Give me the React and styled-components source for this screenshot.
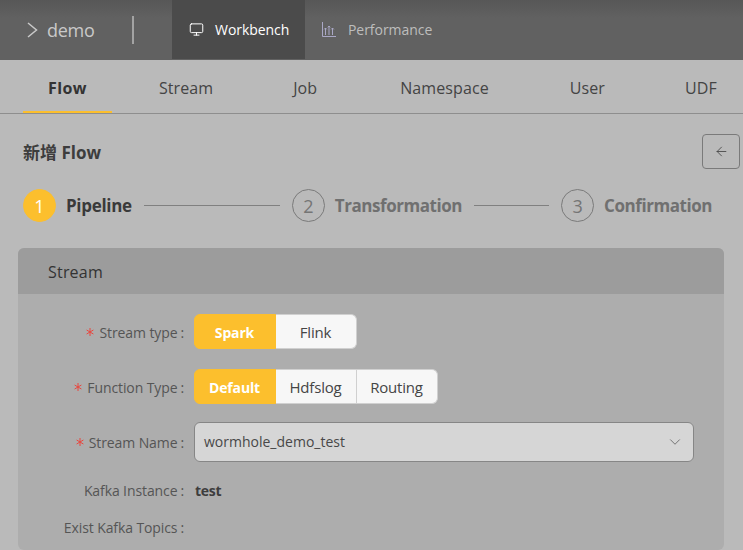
import React from 'react';
import styled, { createGlobalStyle } from 'styled-components';
import { Monitor, ChevronDown, ArrowLeft } from 'lucide-react';

const GlobalStyle = createGlobalStyle`
    html, body {
        margin: 0;
        height: 100%;
        overflow: hidden;
        background: #bababa;
    }
    body {
        font-family: "Open Sans", "Noto Sans CJK SC", sans-serif;
        color: #3a3a3a;
    }
`;

const Page = styled.div`
    width: 743px;
    height: 550px;
    overflow: hidden;
    display: flex;
    flex-direction: column;
    background: #bababa;
`;

const TopBar = styled.header`
    height: 60px;
    flex: none;
    display: flex;
    align-items: stretch;
    background: linear-gradient(#575757, #616161 30%);
`;

const Brand = styled.div`
    width: 132px;
    display: flex;
    align-items: center;
    gap: 9px;
    padding-left: 27px;
    box-sizing: border-box;
    font-size: 18px;
    letter-spacing: -0.3px;
    color: #c9c9c9;
`;

const BrandRule = styled.div`
    width: 2px;
    height: 28px;
    align-self: center;
    margin-right: 38px;
    background: #a3a3a3;
`;

const NavItem = styled.div`
    width: ${(p) => p.$width}px;
    height: 59px;
    display: flex;
    align-items: center;
    gap: ${(p) => (p.$active ? 11 : 12)}px;
    padding-left: 17px;
    box-sizing: border-box;
    font-size: 14px;
    letter-spacing: -0.05px;
    background: ${(p) => (p.$active ? '#4b4b4b' : 'transparent')};
    color: ${(p) => (p.$active ? '#ffffff' : '#bdbdbd')};
`;

const Tabs = styled.nav`
    height: 54px;
    flex: none;
    box-sizing: border-box;
    display: flex;
    padding-left: 23px;
    border-bottom: 1px solid #8e8e8e;
`;

const Tab = styled.div`
    height: 53px;
    box-sizing: border-box;
    padding: 5px 25px 0;
    margin-right: ${(p) => p.$gap}px;
    display: flex;
    align-items: center;
    white-space: nowrap;
    font-size: 16px;
    letter-spacing: ${(p) => (p.$active ? '0.4px' : '0.1px')};
    font-weight: ${(p) => (p.$active ? 700 : 400)};
    color: ${(p) => (p.$active ? '#333333' : '#444444')};
    border-bottom: 2px solid ${(p) => (p.$active ? '#fcbf2d' : 'transparent')};
`;

const TitleRow = styled.div`
    display: flex;
    align-items: center;
    justify-content: space-between;
    padding: 20px 3px 0 23px;
`;

const Title = styled.h2`
    margin: 0;
    font-size: 17px;
    font-weight: 700;
    color: #3d3d3d;
`;

const BackButton = styled.button`
    width: 38px;
    height: 35px;
    padding: 0;
    display: flex;
    align-items: center;
    justify-content: center;
    background: transparent;
    border: 1px solid #7a7a7a;
    border-radius: 4px;
    color: #3f3f3f;
`;

const Steps = styled.div`
    display: flex;
    align-items: center;
    padding: 20px 0 0 23px;
`;

const StepCircle = styled.div`
    width: 33px;
    height: 33px;
    flex: none;
    box-sizing: border-box;
    border-radius: 50%;
    display: flex;
    align-items: center;
    justify-content: center;
    font-size: 18px;
    margin-right: 10px;
    background: ${(p) => (p.$active ? '#fcbf2d' : 'transparent')};
    border: 1px solid ${(p) => (p.$active ? '#fcbf2d' : '#7a7a7a')};
    color: ${(p) => (p.$active ? '#ffffff' : '#757575')};
`;

const StepLabel = styled.div`
    font-size: 17px;
    font-weight: 700;
    letter-spacing: ${(p) => (p.$active ? -0.3 : -0.45)}px;
    white-space: nowrap;
    color: ${(p) => (p.$active ? '#3a3a3a' : '#707070')};
`;

const StepLine = styled.div`
    width: ${(p) => p.$width}px;
    height: 1px;
    margin: 0 12px;
    background: #808080;
`;

const Card = styled.section`
    margin: 26px 19px 0 18px;
    flex: 1;
    min-height: 0;
    border-radius: 6px;
    overflow: hidden;
    background: #adadad;
`;

const CardHeader = styled.div`
    height: 46px;
    box-sizing: border-box;
    display: flex;
    align-items: center;
    padding: 1px 0 0 30px;
    font-size: 16px;
    letter-spacing: 0.2px;
    background: #9c9c9c;
    color: #333333;
`;

const FormBody = styled.div`
    display: flex;
    flex-direction: column;
    padding-top: 20px;
`;

const FormRow = styled.div`
    display: flex;
    align-items: center;
    height: ${(p) => p.$height}px;
    margin-bottom: ${(p) => p.$after}px;
`;

const Label = styled.div`
    width: 176px;
    flex: none;
    display: flex;
    justify-content: flex-end;
    align-items: center;
    padding-right: 10px;
    padding-top: ${(p) => p.$drop || 0}px;
    box-sizing: border-box;
    white-space: nowrap;
    font-size: 14px;
    letter-spacing: -0.1px;
    color: #555555;
`;

const Colon = styled.span`
    margin-left: 3px;
`;

// the required mark sits at mid height in the reference, so it is drawn
const StarIcon = styled.svg`
    margin-right: 5px;
    flex: none;
`;

const RequiredMark = () => (
    <StarIcon width="8" height="8" viewBox="0 0 8 8" stroke="#e8473f" strokeWidth="1" fill="none">
        <path d="M4 0v8M0.6 2l6.8 4M7.4 2L0.6 6" />
    </StarIcon>
);

const Segments = styled.div`
    display: flex;
    height: 35px;
`;

const Segment = styled.div`
    width: ${(p) => (p.$active ? 82 : 81)}px;
    box-sizing: border-box;
    display: flex;
    align-items: center;
    justify-content: center;
    padding: 1px 1px 0 0;
    font-size: ${(p) => (p.$active ? 14 : 15)}px;
    letter-spacing: ${(p) => (p.$active ? -0.15 : -0.2)}px;
    font-weight: ${(p) => (p.$active ? 700 : 400)};
    background: ${(p) => (p.$active ? '#fcbf2d' : '#f7f7f7')};
    color: ${(p) => (p.$active ? '#ffffff' : '#454545')};
    border: 1px solid ${(p) => (p.$active ? '#fcbf2d' : '#d0d0d0')};
    border-left-width: ${(p) => (p.$active ? 1 : 0)}px;
    &:first-child {
        border-radius: 6px 0 0 6px;
    }
    &:last-child {
        border-radius: 0 6px 6px 0;
    }
`;

const Select = styled.div`
    width: 500px;
    height: 40px;
    box-sizing: border-box;
    display: flex;
    align-items: center;
    justify-content: space-between;
    padding: 0 9px 1px 9px;
    background: #d6d6d6;
    border: 1px solid #868686;
    border-radius: 6px;
    font-size: 14px;
    color: #484848;
`;

const PlainValue = styled.div`
    padding-left: 1px;
    font-size: 14px;
    font-weight: 700;
    letter-spacing: -0.3px;
    color: #3d3d3d;
`;

const BrandChevron = () => (
    <svg width="11" height="16" viewBox="0 0 11 16" fill="none" stroke="#c9c9c9" strokeWidth="1.5">
        <path d="M1 1l8.5 7L1 15" />
    </svg>
);

// bar chart with small up arrows, not in the icon packs
const PerformanceIcon = () => (
    <svg width="14" height="15" viewBox="0 0 14 15" fill="none" stroke="#aaa8c6" strokeWidth="1">
        <path d="M0.5 0v14.5H14" />
        <path d="M3.5 13V6M2.2 7.4 3.5 6l1.3 1.4" />
        <path d="M7 13V4M5.8 5.4 7 4l1.2 1.4" />
        <path d="M10.5 13V6M9.2 7.4 10.5 6l1.3 1.4" />
    </svg>
);

function App() {
    return (
        <Page>
            <GlobalStyle />
            <TopBar>
                <Brand>
                    <BrandChevron />
                    demo
                </Brand>
                <BrandRule />
                <NavItem $active $width={133}>
                    <Monitor size={15} strokeWidth={1.6} />
                    Workbench
                </NavItem>
                <NavItem $width={150}>
                    <PerformanceIcon />
                    Performance
                </NavItem>
            </TopBar>

            <Tabs>
                <Tab $active $gap={22}>Flow</Tab>
                <Tab $gap={30}>Stream</Tab>
                <Tab $gap={33}>Job</Tab>
                <Tab $gap={31}>Namespace</Tab>
                <Tab $gap={30}>User</Tab>
                <Tab $gap={0}>UDF</Tab>
            </Tabs>

            <TitleRow>
                <Title>新增 Flow</Title>
                <BackButton><ArrowLeft size={15} strokeWidth={1.3} /></BackButton>
            </TitleRow>

            <Steps>
                <StepCircle $active>1</StepCircle>
                <StepLabel $active>Pipeline</StepLabel>
                <StepLine $width={136} />
                <StepCircle>2</StepCircle>
                <StepLabel>Transformation</StepLabel>
                <StepLine $width={75} />
                <StepCircle>3</StepCircle>
                <StepLabel>Confirmation</StepLabel>
            </Steps>

            <Card>
                <CardHeader>Stream</CardHeader>
                <FormBody>
                    <FormRow $height={35} $after={20}>
                        <Label $drop={1}><RequiredMark />Stream type<Colon>:</Colon></Label>
                        <Segments>
                            <Segment $active>Spark</Segment>
                            <Segment>Flink</Segment>
                        </Segments>
                    </FormRow>
                    <FormRow $height={35} $after={18}>
                        <Label $drop={1}><RequiredMark />Function Type<Colon>:</Colon></Label>
                        <Segments>
                            <Segment $active>Default</Segment>
                            <Segment>Hdfslog</Segment>
                            <Segment>Routing</Segment>
                        </Segments>
                    </FormRow>
                    <FormRow $height={40} $after={18}>
                        <Label><RequiredMark />Stream Name<Colon>:</Colon></Label>
                        <Select>
                            wormhole_demo_test
                            <ChevronDown size={18} strokeWidth={1.1} color="#5f5f5f" />
                        </Select>
                    </FormRow>
                    <FormRow $height={20} $after={17}>
                        <Label>Kafka Instance<Colon>:</Colon></Label>
                        <PlainValue>test</PlainValue>
                    </FormRow>
                    <FormRow $height={20} $after={0}>
                        <Label>Exist Kafka Topics<Colon>:</Colon></Label>
                    </FormRow>
                </FormBody>
            </Card>
        </Page>
    );
}

export default App;
